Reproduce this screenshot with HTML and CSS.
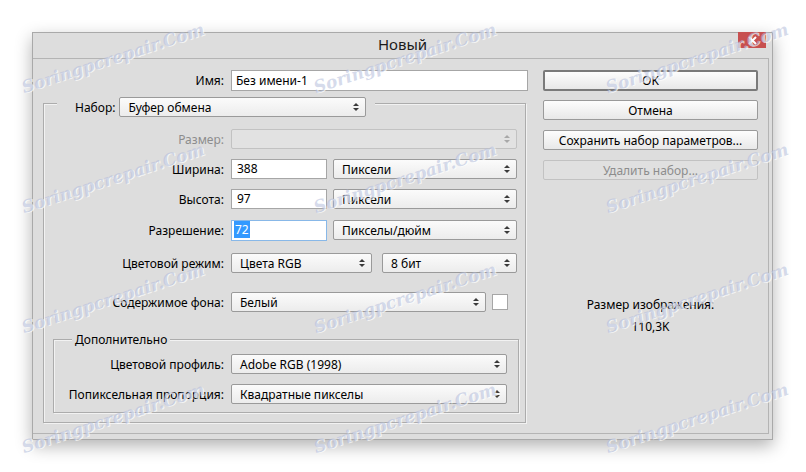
FILE: index.html
```html
<!DOCTYPE html>
<html lang="ru">

<head>
    <meta charset="UTF-8">
    <title>Новый</title>
    <link rel="stylesheet" href="styles.css">
</head>

<body>
    <div class="page">
        <div class="dialog">
            <div class="titlebar">
                <span class="title">Новый</span>
                <span class="close">
                    <svg width="9" height="9" viewBox="0 0 9 9"><path d="M1 1L8 8M8 1L1 8" stroke="#fff" stroke-width="2"/></svg>
                </span>
            </div>
            <div class="client">
                <div class="form">
                    <div class="name-row">
                        <span class="label name-label">Имя:</span>
                        <div class="input name-input">Без имени-1</div>
                    </div>

                    <div class="group preset">
                        <div class="group-head preset-head">
                            <span class="head-label">Набор:</span>
                            <div class="select preset-select"><span>Буфер обмена</span><span class="arrows"></span></div>
                        </div>

                        <div class="row row-size">
                            <span class="label disabled">Размер:</span>
                            <div class="select disabled w-full"><span></span><span class="arrows"></span></div>
                        </div>
                        <div class="row row-10">
                            <span class="label">Ширина:</span>
                            <div class="input num-input">388</div>
                            <div class="select unit-select"><span>Пиксели</span><span class="arrows"></span></div>
                        </div>
                        <div class="row row-10">
                            <span class="label">Высота:</span>
                            <div class="input num-input">97</div>
                            <div class="select unit-select"><span>Пиксели</span><span class="arrows"></span></div>
                        </div>
                        <div class="row row-11">
                            <span class="label">Разрешение:</span>
                            <div class="input num-input focused"><span class="selected">72</span></div>
                            <div class="select unit-select"><span>Пикселы/дюйм</span><span class="arrows"></span></div>
                        </div>
                        <div class="row row-13">
                            <span class="label">Цветовой режим:</span>
                            <div class="select mode-select"><span>Цвета RGB</span><span class="arrows"></span></div>
                            <div class="select bits-select"><span>8 бит</span><span class="arrows"></span></div>
                        </div>
                        <div class="row row-19">
                            <span class="label">Содержимое фона:</span>
                            <div class="select bg-select"><span>Белый</span><span class="arrows"></span></div>
                            <div class="swatch"></div>
                        </div>

                        <div class="group advanced">
                            <div class="group-head advanced-head">Дополнительно</div>
                            <div class="row row-profile">
                                <span class="label label-adv">Цветовой профиль:</span>
                                <div class="select adv-select"><span>Adobe RGB (1998)</span><span class="arrows"></span></div>
                            </div>
                            <div class="row row-10">
                                <span class="label label-adv">Попиксельная пропорция:</span>
                                <div class="select adv-select"><span>Квадратные пикселы</span><span class="arrows"></span></div>
                            </div>
                        </div>
                    </div>
                </div>

                <div class="side">
                    <button class="btn btn-default">OK</button>
                    <button class="btn">Отмена</button>
                    <button class="btn">Сохранить набор параметров...</button>
                    <button class="btn" disabled>Удалить набор...</button>
                    <div class="info">
                        <div>Размер изображения:</div>
                        <div class="info-value">110,3K</div>
                    </div>
                </div>
            </div>
        </div>

        <div class="watermarks">
            <span class="wm">Soringpcrepair.Com</span>
            <span class="wm">Soringpcrepair.Com</span>
            <span class="wm">Soringpcrepair.Com</span>
            <span class="wm">Soringpcrepair.Com</span>
            <span class="wm">Soringpcrepair.Com</span>
            <span class="wm">Soringpcrepair.Com</span>
            <span class="wm">Soringpcrepair.Com</span>
            <span class="wm">Soringpcrepair.Com</span>
            <span class="wm">Soringpcrepair.Com</span>
            <span class="wm">Soringpcrepair.Com</span>
            <span class="wm">Soringpcrepair.Com</span>
            <span class="wm">Soringpcrepair.Com</span>
        </div>
    </div>
</body>

</html>
```

FILE: styles.css
```css
body {
    margin: 0;
    background-color: #fff;
    font-family: "Noto Sans", sans-serif;
    font-size: 12px;
    color: #000;
    overflow: hidden;
}

.page {
    position: relative;
    width: 806px;
    height: 472px;
    padding: 32px 0 0 32px;
    box-sizing: border-box;
    overflow: hidden;
}

.dialog {
    width: 741px;
    height: 408px;
    box-sizing: border-box;
    background-color: #dddddd;
    border: 1px solid #a9a9a9;
    box-shadow: 0 6px 16px rgba(0, 0, 0, 0.3);
    display: flex;
    flex-direction: column;
}

.titlebar {
    height: 25px;
    display: flex;
    align-items: flex-start;
}

.title {
    flex: 1;
    text-align: center;
    font-size: 15px;
    line-height: 23px;
    padding-left: 34px;
    color: #1a1a1a;
}

.close {
    width: 28px;
    height: 16px;
    margin-top: -1px;
    margin-right: 6px;
    background-color: #c75050;
    display: flex;
    align-items: center;
    justify-content: center;
}

.client {
    flex: 1;
    display: flex;
    margin: 0 3px 5px 0;
    border: 1px solid #b4b4b4;
    border-left: none;
    padding: 11px 0 0 1px;
}

.form {
    width: 494px;
}

.label {
    text-align: right;
    margin-right: 7px;
    white-space: nowrap;
}

.label.disabled {
    color: #8d8d8d;
}

.name-row {
    display: flex;
    align-items: center;
    height: 21px;
}

.name-label {
    width: 190px;
}

.input {
    box-sizing: border-box;
    height: 20px;
    background-color: #fff;
    border: 1px solid #a6a6a6;
    padding: 0 4px;
    line-height: 18px;
    white-space: nowrap;
}

.name-input {
    width: 297px;
    height: 21px;
    line-height: 19px;
}

.num-input {
    width: 96px;
    padding-left: 5px;
}

.input.focused {
    border-color: #88b8e8;
    height: 21px;
    padding-left: 2px;
    line-height: 17px;
}

.selected {
    background-color: #3399ff;
    color: #fff;
    padding: 0 1px;
}

.select {
    box-sizing: border-box;
    height: 20px;
    display: flex;
    align-items: center;
    justify-content: space-between;
    padding: 0 6px 0 8px;
    border: 1px solid #9a9a9a;
    border-radius: 2px;
    background: linear-gradient(#fbfbfb, #ececec);
    white-space: nowrap;
}

.select.disabled {
    background: #e2e2e2;
    border-color: #c2c2c2;
}

.arrows {
    display: flex;
    flex-direction: column;
    gap: 2px;
}

.arrows::before,
.arrows::after {
    content: "";
    border-left: 3px solid transparent;
    border-right: 3px solid transparent;
}

.arrows::before {
    border-bottom: 3px solid #3a3a3a;
}

.arrows::after {
    border-top: 3px solid #3a3a3a;
}

.select.disabled .arrows::before {
    border-bottom-color: #a8a8a8;
}

.select.disabled .arrows::after {
    border-top-color: #a8a8a8;
}

.group {
    border: 1px solid #acacac;
    box-shadow: inset 1px 1px 0 #f2f2f2, 1px 1px 0 #f2f2f2;
}

.preset {
    margin: 12px 0 0 9px;
    width: 483px;
    box-sizing: border-box;
    padding-bottom: 9px;
}

.group-head {
    background-color: #dddddd;
    width: fit-content;
}

.preset-head {
    display: flex;
    align-items: center;
    margin: -7px 0 0 13px;
    padding: 0 9px 0 18px;
}

.head-label {
    margin-right: 4px;
}

.preset-select {
    width: 247px;
}

.row {
    display: flex;
    align-items: center;
    height: 20px;
}

.row > .label {
    width: 180px;
}

.row-size {
    margin-top: 12px;
}

.row-10 {
    margin-top: 10px;
}

.row-11 {
    margin-top: 11px;
}

.row-13 {
    margin-top: 13px;
}

.row-19 {
    margin-top: 19px;
}

.w-full {
    width: 286px;
}

.unit-select {
    width: 184px;
    margin-left: 6px;
}

.mode-select {
    width: 141px;
}

.bits-select {
    width: 135px;
    margin-left: 10px;
}

.bg-select {
    width: 255px;
}

.swatch {
    width: 16px;
    height: 16px;
    box-sizing: border-box;
    margin-left: 6px;
    background-color: #fff;
    border: 1px solid #a6a6a6;
}

.advanced {
    margin: 27px 6px 0 9px;
    padding-bottom: 8px;
}

.advanced-head {
    margin: -8px 0 0 18px;
    padding: 0 3px;
    line-height: 16px;
}

.row-profile {
    margin-top: 6px;
}

.row > .label-adv {
    width: 170px;
}

.adv-select {
    width: 276px;
}

.side {
    margin-left: 15px;
    width: 215px;
    display: flex;
    flex-direction: column;
}

.btn {
    height: 20px;
    margin-top: 10px;
    padding: 0;
    font-family: inherit;
    font-size: 12px;
    color: #000;
    border: 1px solid #9a9a9a;
    border-radius: 2px;
    background: linear-gradient(#fdfdfd, #e8e8e8);
}

.btn-default {
    height: 21px;
    margin-top: 0;
    border: 2px solid #7a7a7a;
}

.btn-default + .btn {
    margin-top: 9px;
}

.btn:disabled {
    color: #8d8d8d;
    border-color: #c2c2c2;
    background: #e0e0e0;
}

.info {
    margin-top: 117px;
    text-align: center;
    line-height: 16px;
}

.info-value {
    margin-top: 6px;
}

.watermarks {
    position: absolute;
    top: -2px;
    left: -33px;
    display: grid;
    grid-template-columns: repeat(3, 292px);
    grid-template-rows: repeat(4, 120px);
    pointer-events: none;
}

.wm {
    display: flex;
    align-items: center;
    justify-content: center;
    transform: rotate(-18deg);
    font-family: "DejaVu Serif", serif;
    font-style: italic;
    font-weight: bold;
    font-size: 17px;
    color: rgba(178, 188, 218, 0.55);
    text-shadow: 1px 1px 0 rgba(255, 255, 255, 0.7);
}
```
